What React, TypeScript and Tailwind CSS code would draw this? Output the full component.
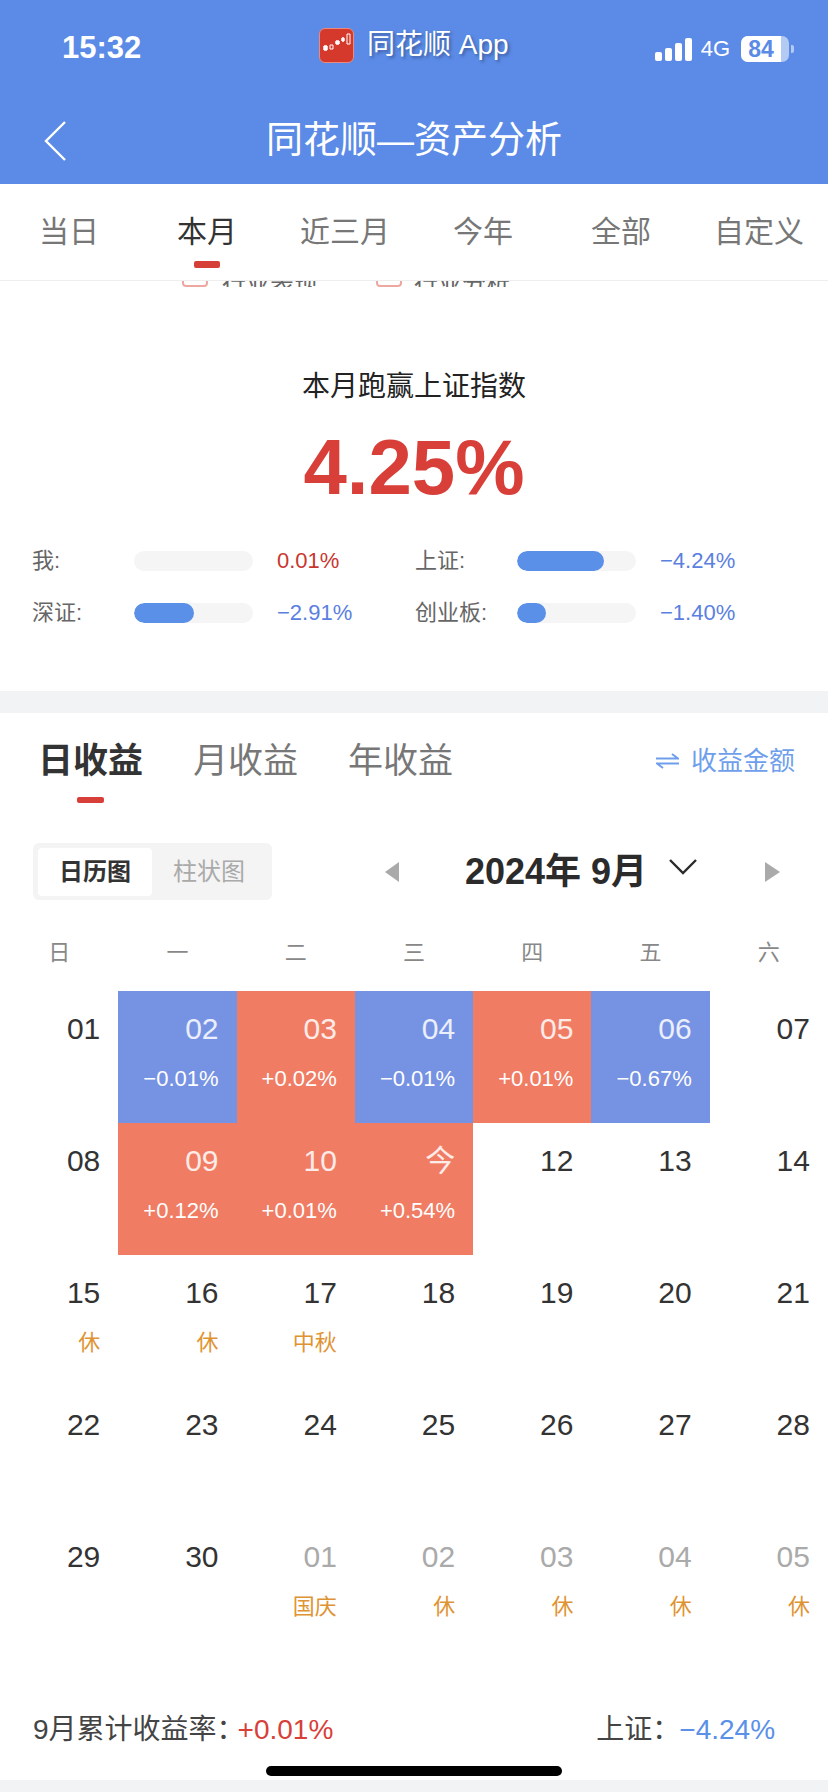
const SANS = "font-['Liberation_Sans','Noto_Sans_CJK_SC',sans-serif]";

const TABS = ["当日", "本月", "近三月", "今年", "全部", "自定义"];
const WEEK = ["日", "一", "二", "三", "四", "五", "六"];

type Day = { n: string; pct?: string; tone?: "up" | "down"; note?: string; dim?: boolean };

const DAYS: Day[] = [
  { n: "01" },
  { n: "02", pct: "−0.01%", tone: "down" },
  { n: "03", pct: "+0.02%", tone: "up" },
  { n: "04", pct: "−0.01%", tone: "down" },
  { n: "05", pct: "+0.01%", tone: "up" },
  { n: "06", pct: "−0.67%", tone: "down" },
  { n: "07" },
  { n: "08" },
  { n: "09", pct: "+0.12%", tone: "up" },
  { n: "10", pct: "+0.01%", tone: "up" },
  { n: "今", pct: "+0.54%", tone: "up" },
  { n: "12" },
  { n: "13" },
  { n: "14" },
  { n: "15", note: "休" },
  { n: "16", note: "休" },
  { n: "17", note: "中秋" },
  { n: "18" },
  { n: "19" },
  { n: "20" },
  { n: "21" },
  { n: "22" },
  { n: "23" },
  { n: "24" },
  { n: "25" },
  { n: "26" },
  { n: "27" },
  { n: "28" },
  { n: "29" },
  { n: "30" },
  { n: "01", note: "国庆", dim: true },
  { n: "02", note: "休", dim: true },
  { n: "03", note: "休", dim: true },
  { n: "04", note: "休", dim: true },
  { n: "05", note: "休", dim: true },
];

function StatusBar() {
  return (
    <div className="flex h-[72px] items-start text-white">
      <div className="mt-[29px] ml-[62px] w-[257px] text-[31px] leading-[38px] font-bold">15:32</div>
      <div className="mt-6 flex items-center">
        <div className="flex h-[35px] w-[35px] items-end rounded-[6px] border border-[#e98a80] bg-[#d5392c] pb-[9px] pl-[2px]">
          <svg width="30" height="20" viewBox="0 0 30 20" fill="none" stroke="#fff" strokeWidth="1">
            <path d="M2 13h3v4H2zM8 12h3v4H8zM14 8h3v3h-3zM20 5h2v3h-2zM25 1h3v10h-3z" />
            <path d="M2 13h3v4H2zM14 8h3v3h-3zM20 5h2v3h-2z" fill="#fff" />
          </svg>
        </div>
        <span className="ml-[13px] text-[28px] leading-[42px] font-normal text-white [text-shadow:2px_2px_3px_rgba(40,60,110,0.55)]">
          同花顺 App
        </span>
      </div>
      <div className="ml-auto flex items-center pt-[36px] pr-[34px]">
        <div className="flex h-[23px] items-end gap-[3px]">
          <div className="h-[9px] w-[7px] rounded-[2px] bg-white" />
          <div className="h-[13px] w-[7px] rounded-[2px] bg-white" />
          <div className="h-[18px] w-[7px] rounded-[2px] bg-white" />
          <div className="h-[23px] w-[7px] rounded-[2px] bg-white" />
        </div>
        <span className="ml-[9px] text-[22px] leading-[26px]">4G</span>
        <div className="ml-[11px] flex h-[26px] w-[48px] overflow-hidden rounded-[7px] bg-[#b3caf2]">
          <div className="flex w-10 items-center justify-center bg-white text-[23px] font-bold text-[#5b8be6]">84</div>
        </div>
        <div className="ml-[2px] h-2 w-[3px] rounded-r-[2px] bg-[#b3caf2]" />
      </div>
    </div>
  );
}

function StatRow({ label, fill, value, red }: { label: string; fill: number; value: string; red?: boolean }) {
  return (
    <div className="flex items-center">
      <span className="w-[102px] shrink-0 text-[22px] leading-[20px] text-[#666]">{label}</span>
      <div className="h-5 w-[119px] shrink-0 overflow-hidden rounded-full bg-[#f5f5f5]">
        {fill > 0 && <div className="h-5 rounded-full bg-[#5a90e8]" style={{ width: fill }} />}
      </div>
      <span className={`ml-6 text-[22px] leading-[20px] ${red ? "text-[#c8372f]" : "text-[#5b80e0]"}`}>{value}</span>
    </div>
  );
}

function DayCell({ d }: { d: Day }) {
  const bg = d.tone === "up" ? "bg-[#f07c64]" : d.tone === "down" ? "bg-[#7692e3]" : "";
  const numColor = d.tone ? "text-white/85" : d.dim ? "text-[#aaa]" : "text-[#333]";
  return (
    <div className={`flex h-[132px] flex-col items-end pt-[22px] pr-[18px] ${bg}`}>
      <span className={`text-[30px] leading-[32px] ${numColor}`}>{d.n}</span>
      {d.pct && <span className="mt-[21px] text-[22px] leading-[26px] text-white">{d.pct}</span>}
      {d.note && <span className="mt-[21px] text-[22px] leading-[26px] text-[#df9433]">{d.note}</span>}
    </div>
  );
}

export default function App() {
  return (
    <div className={`relative h-[1792px] w-[828px] overflow-hidden bg-white ${SANS}`}>
      <header className="h-[184px] bg-[#5b8be6]">
        <StatusBar />
        <div className="relative flex h-[112px] items-start justify-center pt-[46px] text-[37px] leading-[46px] text-white">
          <svg className="absolute top-[49px] left-[43px]" width="24" height="40" viewBox="0 0 24 40" fill="none" stroke="#fff" strokeWidth="2.4">
            <path d="M22 1 3 20l19 19" />
          </svg>
          同花顺—资产分析
        </div>
      </header>

      <nav className="grid h-[97px] grid-cols-6 border-b border-[#eee]">
        {TABS.map((t) => (
          <div key={t} className="flex flex-col items-center pt-[30px]">
            <span className={`text-[30px] leading-9 ${t === "本月" ? "text-[#333]" : "text-[#777]"}`}>{t}</span>
            {t === "本月" && <div className="mt-[11px] h-[7px] w-[26px] rounded-[2px] bg-[#d63f38]" />}
          </div>
        ))}
      </nav>

      <div className="flex h-[6px] overflow-hidden pl-[182px]">
        <div className="flex h-[6px] items-end">
          <div className="h-[20px] w-[26px] rounded-[4px] border-2 border-[#eda8a2]" />
          <span className="ml-[14px] w-[154px] text-[24px] leading-[6px] text-[#666]">行业表现</span>
          <div className="h-[20px] w-[26px] rounded-[4px] border-2 border-[#eda8a2]" />
          <span className="ml-3 text-[24px] leading-[6px] text-[#666]">行业分析</span>
        </div>
      </div>

      <section className="h-[404px] pt-[82px]">
        <p className="text-center text-[28px] leading-9 text-[#222]">本月跑赢上证指数</p>
        <p className="mt-[17px] text-center text-[78px] leading-[90px] font-bold text-[#d83f39]">4.25%</p>
        <div className="mt-[39px] grid grid-cols-[383px_1fr] gap-y-8 pl-[32px]">
          <StatRow label="我:" fill={0} value="0.01%" red />
          <StatRow label="上证:" fill={87} value="−4.24%" />
          <StatRow label="深证:" fill={60} value="−2.91%" />
          <StatRow label="创业板:" fill={29} value="−1.40%" />
        </div>
      </section>

      <div className="h-[22px] bg-[#f2f3f5]" />

      <section>
        <div className="flex items-center pt-[26px] pr-[33px] pl-[38px]">
          <span className="text-[35px] leading-[44px] font-bold text-[#333]">日收益</span>
          <span className="ml-[50px] text-[35px] leading-[44px] text-[#777]">月收益</span>
          <span className="ml-[50px] text-[35px] leading-[44px] text-[#777]">年收益</span>
          <svg className="mr-3 ml-auto" width="23" height="16" viewBox="0 0 23 16" fill="none" stroke="#6f9fec" strokeWidth="2">
            <path d="M0 5.5h22L16 1M23 10.500H1L7 15" />
          </svg>
          <span className="text-[26px] leading-[44px] text-[#6f9fec]">收益金额</span>
        </div>
        <div className="mt-[14px] ml-[77px] h-[6px] w-[27px] rounded-[2px] bg-[#d83f39]" />

        <div className="mt-10 flex items-center pr-[48px] pl-[33px]">
          <div className="flex h-[57px] w-[239px] items-center rounded-[6px] bg-[#f4f4f4] pl-[5px] text-[24px]">
            <span className="flex h-12 w-[114px] items-center justify-center rounded-[4px] bg-white font-bold text-[#333]">日历图</span>
            <span className="w-[114px] text-center text-[#aaa]">柱状图</span>
          </div>
          <div className="ml-[113px] h-0 w-0 border-y-[10px] border-r-[14px] border-y-transparent border-r-[#aaa]" />
          <span className="ml-[66px] text-[36px] leading-[57px] font-bold whitespace-pre text-[#2b2b2b]">2024年 9月</span>
          <svg className="mb-[10px] ml-[21px]" width="30" height="17" viewBox="0 0 30 17" fill="none" stroke="#2b2b2b" strokeWidth="2.4">
            <path d="m2 2 13 13L28 2" />
          </svg>
          <div className="ml-auto h-0 w-0 border-y-[10px] border-l-[15px] border-y-transparent border-l-[#aaa]" />
        </div>

        <div className="mt-[38px] grid grid-cols-7 text-center text-[22px] leading-[30px] text-[#888]">
          {WEEK.map((w) => (
            <span key={w}>{w}</span>
          ))}
        </div>

        <div className="mt-[23px] grid grid-cols-7">
          {DAYS.map((d, i) => (
            <DayCell key={i} d={d} />
          ))}
        </div>

        <div className="mt-[61px] flex items-center pl-[33px] text-[28px] leading-9 text-[#444]">
          <span>9月累计收益率：</span>
          <span className="ml-[-7px] text-[#d83f39]">+0.01%</span>
          <span className="ml-[263px]">上证：</span>
          <span className="ml-[-1px] text-[#5a90e8]">−4.24%</span>
        </div>
      </section>

      <div className="absolute top-[1766px] left-[266px] h-[10px] w-[296px] rounded-full bg-black" />
      <div className="absolute top-[1780px] left-0 h-3 w-full bg-[#f2f3f5]" />
    </div>
  );
}
